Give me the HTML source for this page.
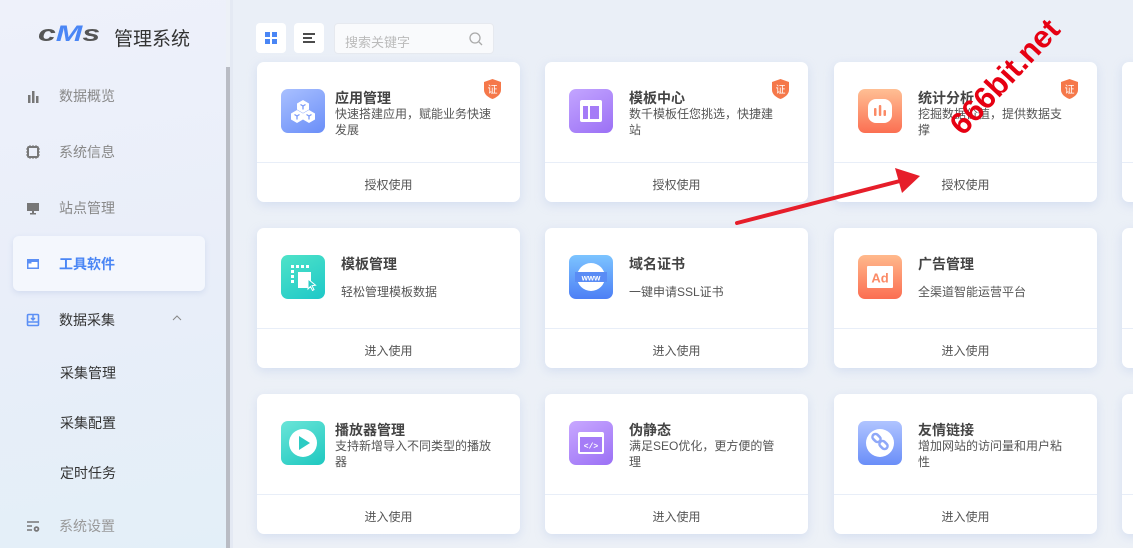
<!DOCTYPE html>
<html><head><meta charset="utf-8"><style>
*{margin:0;padding:0;box-sizing:border-box}
body{width:1133px;height:548px;overflow:hidden;font-family:"Liberation Sans","Noto Sans CJK SC",sans-serif;background:#edf1f7;position:relative}
.side{position:absolute;left:0;top:0;width:226px;height:548px;background:linear-gradient(170deg,#eef1fa 0%,#e9eef9 50%,#e3eff8 100%)}
.sb{position:absolute;left:226px;top:67px;width:4px;height:481px;background:#b9bcc4}
.sbt{position:absolute;left:230px;top:0;width:3px;height:548px;background:#e4e9f3}
.logo{position:absolute;left:114px;top:24px;font-size:19px;color:#333}
.lg{position:absolute;left:38px;top:21px;font-style:italic;font-weight:900;font-size:22px;line-height:26px;color:#555;font-family:"Liberation Sans",sans-serif;transform:scaleX(1.45);transform-origin:left}
.lg i{color:#4a86f5}
.mi{position:absolute;left:25px;font-size:14px;color:#888;display:flex;align-items:center}
.mi span.ic{width:16px;height:16px;margin-right:18px;display:inline-block}
.act{position:absolute;left:13px;top:236px;width:192px;height:55px;background:#f4f7fd;border-radius:6px;box-shadow:0 2px 6px rgba(160,180,220,.3)}
.sub{position:absolute;left:60px;font-size:14px;color:#333}
.main{position:absolute;left:233px;top:0;right:0;bottom:0;background:linear-gradient(180deg,#eaeff7,#edf1f7)}
.tb{position:absolute;top:23px;width:30px;height:30px;background:#fff;border-radius:4px}
.search{position:absolute;left:334px;top:23px;width:160px;height:31px;background:#f9fafc;border:1px solid #e6e9ef;border-radius:4px;font-size:13px;color:#bbb;padding:8px 10px}
.card{position:absolute;width:263px;height:140px;background:#fff;border-radius:7px;box-shadow:0 3px 10px rgba(170,190,230,.35)}
.card .ico{position:absolute;left:24px;top:27px;width:44px;height:44px;border-radius:7px}
.card .t{position:absolute;left:78px;top:26px;font-size:14px;font-weight:bold;color:#444}
.card .d{position:absolute;left:78px;top:44px;width:160px;font-size:12px;line-height:16px;color:#555}
.card.r .t{left:84px}.card.r .d{left:84px;width:154px}
.card .ft{position:absolute;left:0;right:0;bottom:0;height:40px;border-top:1px solid #e8eef8;text-align:center;font-size:12px;color:#555;line-height:44px}
.badge{position:absolute;right:19px;top:17px;width:17px;height:20px}
</style></head><body>
<div class="side">
 <div class="lg">c<i>M</i>s</div>
 <div class="logo">管理系统</div>
 <div class="mi" style="top:86px"><span class="ic"><svg width="16" height="16"><rect x="3" y="7" width="2.5" height="8" fill="#777"/><rect x="7" y="3" width="2.5" height="12" fill="#777"/><rect x="11" y="8" width="2.5" height="7" fill="#777"/></svg></span>数据概览</div>
 <div class="mi" style="top:142px"><span class="ic"><svg width="16" height="16"><rect x="3" y="3" width="10" height="10" rx="1" fill="none" stroke="#777" stroke-width="2"/><path d="M5 1v2M8 1v2M11 1v2M5 13v2M8 13v2M11 13v2M1 5h2M1 8h2M1 11h2M13 5h2M13 8h2M13 11h2" stroke="#777"/></svg></span>系统信息</div>
 <div class="mi" style="top:198px"><span class="ic"><svg width="16" height="16"><rect x="2" y="3" width="12" height="8" fill="#777"/><rect x="7" y="11" width="2" height="2" fill="#777"/><rect x="5" y="13" width="6" height="1.5" fill="#777"/></svg></span>站点管理</div>
 <div class="act"></div>
 <div class="mi" style="top:254px;color:#4a86f5;font-weight:bold"><span class="ic"><svg width="16" height="16"><rect x="2" y="3" width="12" height="10" fill="#5b8ff5"/><rect x="3.5" y="6" width="9" height="5.5" fill="#fff"/><rect x="3.5" y="6" width="3" height="1.5" fill="#5b8ff5"/></svg></span>工具软件</div>
 <div class="mi" style="top:310px;color:#333"><span class="ic"><svg width="16" height="16"><rect x="2.5" y="2.5" width="11" height="11" rx="1" fill="none" stroke="#5b8ff5" stroke-width="1.6"/><path d="M8 3v5M6 6l2 2 2-2M3 10h10" stroke="#5b8ff5" stroke-width="1.5" fill="none"/></svg></span>数据采集</div>
 <svg style="position:absolute;left:171px;top:314px" width="12" height="8"><path d="M2 6l4-4 4 4" stroke="#888" fill="none"/></svg>
 <div class="sub" style="top:363px">采集管理</div>
 <div class="sub" style="top:413px">采集配置</div>
 <div class="sub" style="top:463px">定时任务</div>
 <div class="mi" style="top:516px;color:#999"><span class="ic"><svg width="16" height="16"><path d="M2 4h12M2 8h5M2 12h5" stroke="#777" stroke-width="1.6"/><circle cx="11.5" cy="11" r="2.8" fill="#777"/><circle cx="11.5" cy="11" r="1" fill="#eef"/></svg></span>系统设置</div>
</div>
<div class="sb"></div><div class="sbt"></div>
<div class="main"></div>
<div class="tb" style="left:256px"><svg width="30" height="30"><rect x="9" y="9" width="5" height="5" fill="#4a86f5"/><rect x="16" y="9" width="5" height="5" fill="#4a86f5"/><rect x="9" y="16" width="5" height="5" fill="#4a86f5"/><rect x="16" y="16" width="5" height="5" fill="#4a86f5"/></svg></div>
<div class="tb" style="left:294px"><svg width="30" height="30"><path d="M9 11h12M9 15h9M9 19h12" stroke="#333" stroke-width="1.8"/></svg></div>
<div class="search">搜索关键字<svg style="position:absolute;right:10px;top:8px" width="14" height="14"><circle cx="6" cy="6" r="5" fill="none" stroke="#aaa" stroke-width="1.3"/><path d="M10 10l3 3" stroke="#aaa" stroke-width="1.3"/></svg></div>

<div class="card" style="left:257px;top:62px"><div class="ico" style="background:linear-gradient(150deg,#a9c0ff,#6a8ef8)"><svg width="44" height="44"><g fill="#fff"><path d="M22 11l6 3.5v6L22 24l-6-3.5v-6z"/><path d="M16 21l6 3.5v6L16 34l-6-3.5v-6z"/><path d="M28 21l6 3.5v6L28 34l-6-3.5v-6z"/></g><g stroke="#7b9af9" stroke-width="1.3" fill="none"><path d="M19.5 15.5L22 17l2.5-1.5M22 17v3.5M13.5 25.5L16 27l2.5-1.5M16 27v3.5M25.5 25.5L28 27l2.5-1.5M28 27v3.5"/></g></svg></div><div class="t">应用管理</div><div class="d">快速搭建应用，赋能业务快速发展</div><div class="ft">授权使用</div>
<svg class="badge" viewBox="0 0 17 20"><path d="M8.5 0L17 3v8c0 4-4 7.5-8.5 9C4 18.5 0 15 0 11V3z" fill="#f5784a"/><text x="8.5" y="14" font-size="10" fill="#fff" text-anchor="middle" font-family="Noto Sans CJK SC">证</text></svg></div>
<div class="card r" style="left:545px;top:62px"><div class="ico" style="background:linear-gradient(150deg,#c3a5ff,#9b70f5)"><svg width="44" height="44"><rect x="11" y="11" width="22" height="22" rx="2" fill="#fff"/><rect x="14" y="17" width="5" height="13" fill="#a57cf7"/><rect x="21" y="17" width="9" height="13" fill="#a57cf7"/></svg></div><div class="t">模板中心</div><div class="d">数千模板任您挑选，快捷建站</div><div class="ft">授权使用</div>
<svg class="badge" viewBox="0 0 17 20"><path d="M8.5 0L17 3v8c0 4-4 7.5-8.5 9C4 18.5 0 15 0 11V3z" fill="#f5784a"/><text x="8.5" y="14" font-size="10" fill="#fff" text-anchor="middle" font-family="Noto Sans CJK SC">证</text></svg></div>
<div class="card r" style="left:834px;top:62px"><div class="ico" style="background:linear-gradient(180deg,#ffbf94,#fb6f52)"><svg width="44" height="44"><rect x="10" y="10" width="24" height="24" rx="8" fill="#fff"/><g fill="#fb8a66"><rect x="16" y="19" width="2.5" height="8" rx="1"/><rect x="20.8" y="16" width="2.5" height="11" rx="1"/><rect x="25.5" y="21" width="2.5" height="6" rx="1"/></g></svg></div><div class="t">统计分析</div><div class="d">挖掘数据价值，提供数据支撑</div><div class="ft">授权使用</div>
<svg class="badge" viewBox="0 0 17 20"><path d="M8.5 0L17 3v8c0 4-4 7.5-8.5 9C4 18.5 0 15 0 11V3z" fill="#f5784a"/><text x="8.5" y="14" font-size="10" fill="#fff" text-anchor="middle" font-family="Noto Sans CJK SC">证</text></svg></div>
<div class="card" style="left:1122px;top:62px"><div class="ft"></div></div>

<div class="card" style="left:257px;top:228px"><div class="ico" style="background:linear-gradient(150deg,#4fe3c8,#1ec8c8)"><svg width="44" height="44"><g fill="#fff"><rect x="10" y="10" width="3" height="3"/><rect x="15" y="10" width="3" height="3"/><rect x="20" y="10" width="3" height="3"/><rect x="25" y="10" width="3" height="3"/><rect x="10" y="15" width="3" height="3"/><rect x="10" y="20" width="3" height="3"/><rect x="10" y="25" width="3" height="3"/><path d="M17 17h13v16H17z"/></g><path d="M27 24l0 10 2.5-2.5 2 4 1.5-.8-2-4 3.5-.5z" fill="#2acbc6" stroke="#fff" stroke-width="1"/></svg></div><div class="t" style="left:84px">模板管理</div><div class="d" style="left:84px;top:56px">轻松管理模板数据</div><div class="ft">进入使用</div></div>
<div class="card" style="left:545px;top:228px"><div class="ico" style="background:linear-gradient(180deg,#7cc4ff,#4d7ff5)"><svg width="44" height="44"><circle cx="22" cy="22" r="14" fill="#fff"/><rect x="6" y="17" width="32" height="10" fill="#5a8cf5"/><text x="22" y="25.5" font-size="8" font-weight="bold" fill="#fff" text-anchor="middle" font-family="Liberation Sans">www</text></svg></div><div class="t" style="left:84px">域名证书</div><div class="d" style="left:84px;top:56px">一键申请SSL证书</div><div class="ft">进入使用</div></div>
<div class="card" style="left:834px;top:228px"><div class="ico" style="background:linear-gradient(180deg,#ffb98c,#fb6e52)"><svg width="44" height="44"><rect x="9" y="11" width="26" height="22" rx="1" fill="#fff"/><text x="22" y="27.5" font-size="13" font-weight="bold" fill="#fb8a66" text-anchor="middle" font-family="Liberation Sans">Ad</text></svg></div><div class="t" style="left:84px">广告管理</div><div class="d" style="left:84px;top:56px">全渠道智能运营平台</div><div class="ft">进入使用</div></div>
<div class="card" style="left:1122px;top:228px"><div class="ft"></div></div>

<div class="card" style="left:257px;top:394px"><div class="ico" style="background:linear-gradient(150deg,#6ae5d8,#1ec8c0)"><svg width="44" height="44"><circle cx="22" cy="22" r="14" fill="#fff"/><path d="M18 15v14l11-7z" fill="#2ccbc3"/></svg></div><div class="t">播放器管理</div><div class="d">支持新增导入不同类型的播放器</div><div class="ft">进入使用</div></div>
<div class="card r" style="left:545px;top:394px"><div class="ico" style="background:linear-gradient(150deg,#c8a8ff,#9b70f5)"><svg width="44" height="44"><rect x="9" y="11" width="26" height="22" rx="2" fill="#fff"/><rect x="11" y="16" width="22" height="15" fill="#a57cf7"/><text x="22" y="27.5" font-size="8" font-weight="bold" fill="#fff" text-anchor="middle" font-family="Liberation Mono">&lt;/&gt;</text></svg></div><div class="t">伪静态</div><div class="d">满足SEO优化，更方便的管理</div><div class="ft">进入使用</div></div>
<div class="card r" style="left:834px;top:394px"><div class="ico" style="background:linear-gradient(180deg,#b0c4ff,#6a8ef8)"><svg width="44" height="44"><circle cx="22" cy="22" r="14" fill="#fff"/><g stroke="#8fa8f8" stroke-width="2.5" fill="none"><rect x="14" y="14" width="9" height="6" rx="3" transform="rotate(45 18.5 17)"/><rect x="21" y="21" width="9" height="6" rx="3" transform="rotate(45 25.5 24)"/></g></svg></div><div class="t">友情链接</div><div class="d">增加网站的访问量和用户粘性</div><div class="ft">进入使用</div></div>
<div class="card" style="left:1122px;top:394px"><div class="ft"></div></div>

<svg style="position:absolute;left:0;top:0" width="1133" height="548"><path d="M737 223L900 181" stroke="#e61e2a" stroke-width="4" stroke-linecap="round"/><path d="M920 176L895 168L902 193z" fill="#e61e2a"/></svg>
<div style="position:absolute;left:925px;top:60px;width:160px;text-align:center;font-size:31px;font-weight:bold;color:#e60012;transform:rotate(-47deg);transform-origin:center;font-family:'Liberation Sans',sans-serif;line-height:34px">666bit.net</div>
</body></html>
